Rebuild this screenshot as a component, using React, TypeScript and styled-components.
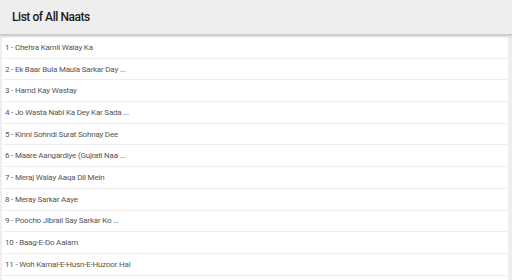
import React from "react";
import styled, { createGlobalStyle } from "styled-components";

const GlobalStyle = createGlobalStyle`
  html, body {
    margin: 0;
    padding: 0;
    background: #eeeeee;
    font-family: Roboto, "Noto Sans", Arial, sans-serif;
    overflow: hidden;
  }
`;

const Page = styled.div`
  width: 512px;
  height: 280px;
  display: flex;
  flex-direction: column;
  background: #eeeeee;
  overflow: hidden;
`;

const Header = styled.header`
  height: 34px;
  flex: none;
  display: flex;
  align-items: center;
  padding-left: 12px;
  background: #eeeeee;
  border-bottom: 1px solid #c8c8c8;
  box-shadow: 0 1px 3px rgba(0, 0, 0, 0.18);
  position: relative;
  z-index: 1;
`;

const Title = styled.h1`
  margin: 0;
  font-size: 12px;
  font-weight: 500;
  letter-spacing: -0.45px;
  color: #1a1a1a;
`;

const List = styled.ul`
  list-style: none;
  margin: 2px 4px 0 2px;
  padding: 0;
  display: flex;
  flex-direction: column;
  gap: 1px;
`;

const Item = styled.li`
  height: 20.7px;
  flex: none;
  display: flex;
  align-items: center;
  padding-left: 3px;
  background: #ffffff;
  font-size: 8px;
  letter-spacing: -0.2px;
  color: #555555;
  white-space: nowrap;
`;

const naats = [
  "Chehra Kamli Walay Ka",
  "Ek Baar Bula Maula Sarkar Day ...",
  "Hamd Kay Wastay",
  "Jo Wasta Nabi Ka Dey Kar Sada ...",
  "Kinni Sohndi Surat Sohnay Dee",
  "Maare Aangardiye (Gujrati Naa ...",
  "Meraj Walay Aaqa Dil Mein",
  "Meray Sarkar Aaye",
  "Poocho Jibrail Say Sarkar Ko  ...",
  "Baag-E-Do Aalam",
  "Woh Kamal-E-Husn-E-Huzoor Hai",
];

export default function App() {
  return (
    <Page>
      <GlobalStyle />
      <Header>
        <Title>List of All Naats</Title>
      </Header>
      <List>
        {naats.map((name, i) => (
          <Item key={i}>{`${i + 1} - ${name}`}</Item>
        ))}
        <Item />
      </List>
    </Page>
  );
}
